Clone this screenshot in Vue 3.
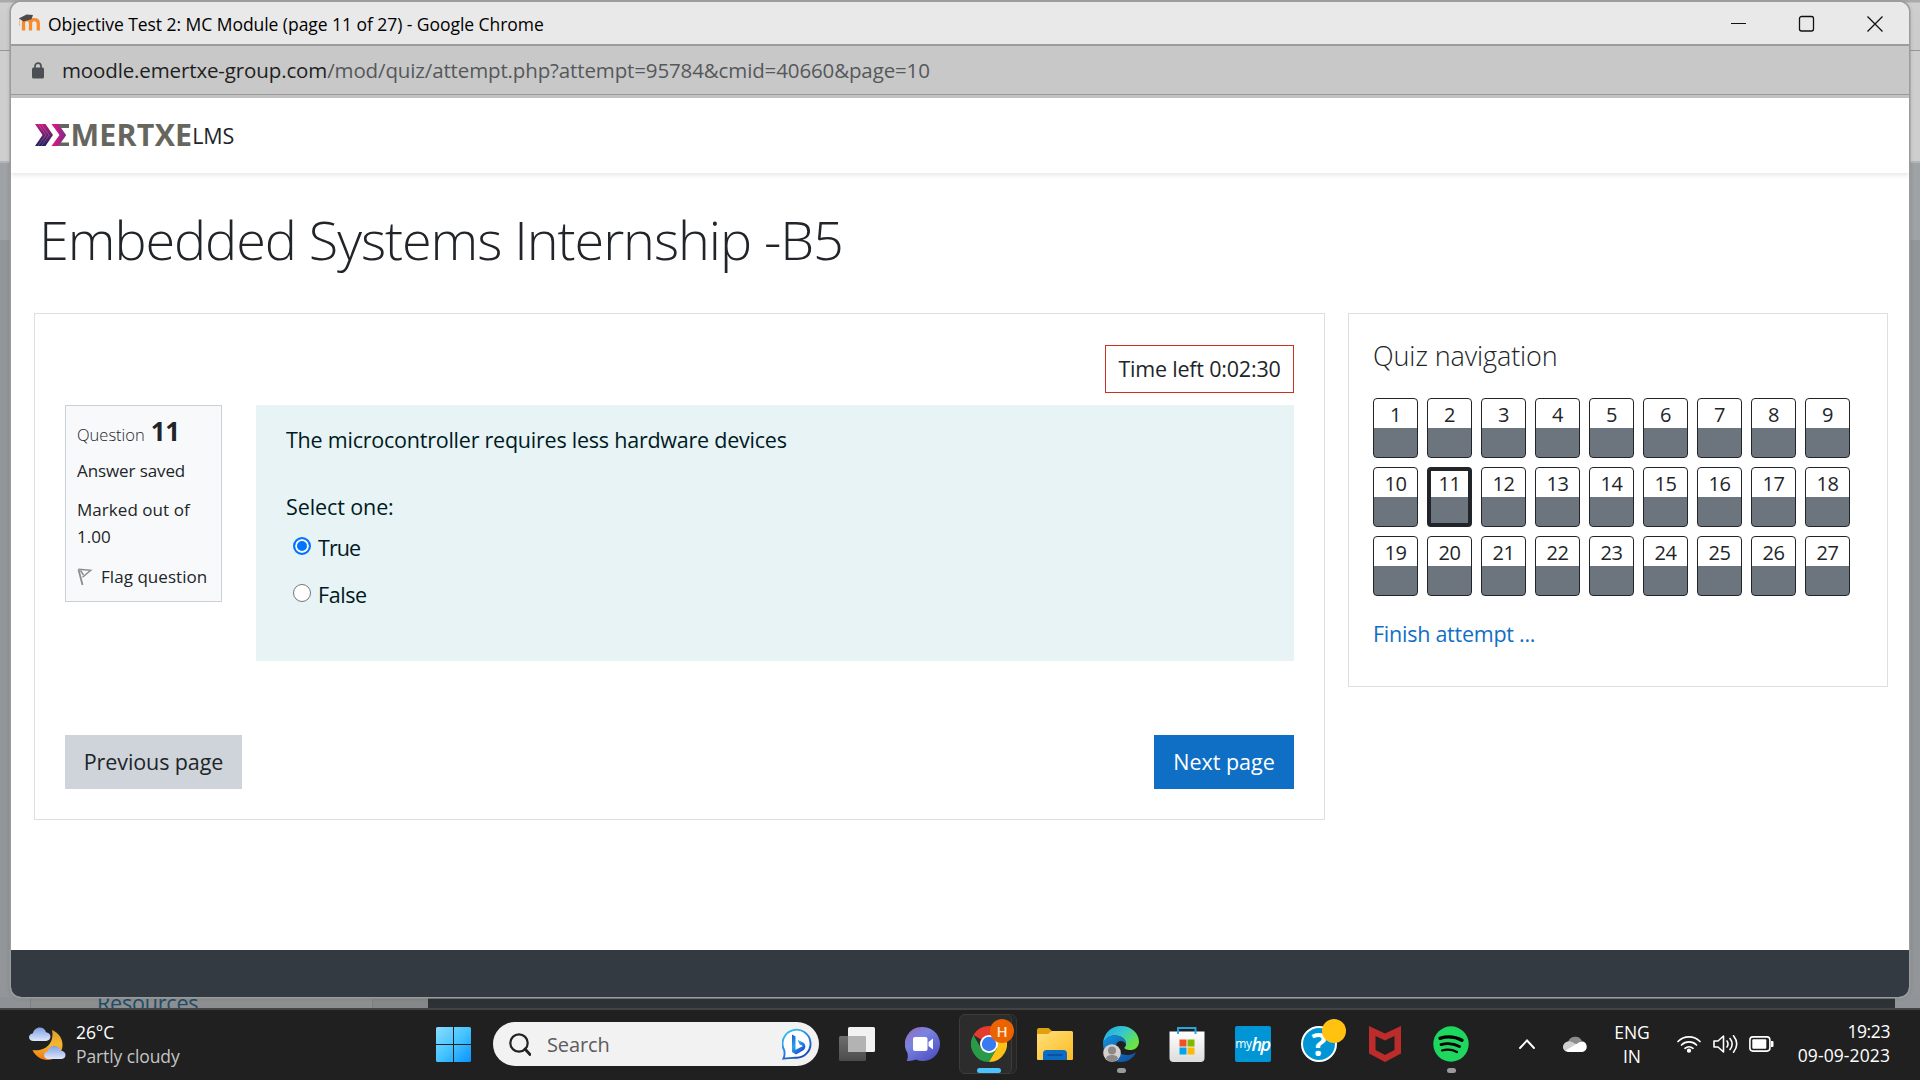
<script setup>
const questions = Array.from({ length: 27 }, (_, i) => i + 1)
const current = 11
</script>

<template>
  <div class="desktop">
    <div class="behind">
      <div class="b-tabs"></div>
      <div class="b-bar"></div>
      <div class="b-head"></div>
      <div class="b-body"></div>
      <div class="b-foot">
        <span class="b-margin"></span>
        <span class="b-list"><span class="b-link">Resources</span></span>
        <span class="b-scroll"></span>
        <span class="b-dark"></span>
        <span class="b-rest"></span>
      </div>
    </div>

    <div class="window">
      <div class="titlebar">
        <svg class="favicon" width="24" height="18" viewBox="0 0 24 18">
          <path d="M5.5 16.5V9.5c0-2.6 1.5-3.8 3.5-3.8s3.500 1.200 3.500 3.800v7M12.500 9.500c0-2.600 1.500-3.800 3.700-3.800s4.100 1.200 4.100 3.800v7" fill="none" stroke="#f98a2b" stroke-width="3.300" />
          <path d="M.8 4.600 8.500.5 15 1l-1.500 4.200-8 2.300z" fill="#4c4a4a" />
          <path d="M2 5c-.7 2-.7 4-.3 7" fill="none" stroke="#f6b98a" stroke-width="1" />
        </svg>
        <span class="wintitle">Objective Test 2: MC Module (page 11 of 27) - Google Chrome</span>
        <svg class="controls" width="160" height="20" viewBox="0 0 160 20" fill="none" stroke="#111">
          <path d="M2 9.500h15" stroke-width="1.200" />
          <rect x="70.500" y="2.500" width="14" height="14.500" rx="2" stroke-width="1.300" />
          <path d="M138.500 2.500l15 15M153.500 2.500l-15 15" stroke-width="1.300" />
        </svg>
      </div>
      <div class="urlbar">
        <svg width="12" height="17" viewBox="0 0 12 17">
          <path d="M3 8V4.200a3 3 0 0 1 6 0V8" fill="none" stroke="#4b4f54" stroke-width="1.700" />
          <rect x="0" y="5.500" width="12" height="11" rx="1.500" fill="#4b4f54" />
        </svg>
        <span class="url"><span class="domain">moodle.emertxe-group.com</span>/mod/quiz/attempt.php?attempt=95784&amp;cmid=40660&amp;page=10</span>
      </div>

      <header class="site">
        <svg class="mark" width="35" height="23" viewBox="0 0 35 23">
          <defs>
            <linearGradient id="mk1" x1="0" y1="0" x2="0" y2="1">
              <stop offset="0" stop-color="#c4177c" /><stop offset=".5" stop-color="#6a2270" /><stop offset="1" stop-color="#1e2360" />
            </linearGradient>
            <linearGradient id="mk2" x1="0" y1="0" x2="1" y2="0">
              <stop offset="0" stop-color="#ec1380" /><stop offset="1" stop-color="#7c2a90" />
            </linearGradient>
          </defs>
          <path d="M20 0h14v4h-8l5 7.500-5 7h8V22H18l7-10.500z" fill="#66645f" />
          <path d="M0 0h10.500l7.500 11-7.500 11H0l7.500-11z" fill="url(#mk1)" />
          <path d="M3 0l8 11M6 0l8 11M3 22l8-11M6.500 22l7.500-11" stroke="#fff" stroke-width=".5" opacity=".4" />
          <path d="M16.500 0h6.500l8 11-8 11h-6.500l8-11z" fill="url(#mk2)" />
        </svg>
        <span class="brand">MERTXE</span><span class="lms">LMS</span>
      </header>

      <main>
        <h1>Embedded Systems Internship -B5</h1>
        <div class="cols">
          <section class="card quiz">
            <div class="timer">Time left 0:02:30</div>
            <div class="qrow">
              <aside class="info">
                <div class="qno"><span>Question</span><b>11</b></div>
                <div class="state">Answer saved</div>
                <div class="grade">Marked out of<br>1.00</div>
                <div class="flag">
                  <svg width="16" height="18" viewBox="0 0 16 18" fill="none" stroke="#8a8d90">
                    <path d="M1.500 1.500l4 15.500" stroke-width="1.800" />
                    <path d="M1.500 1.300l12.300 1L5.500 9.200M3.500 2.500l3 4.500" stroke-width="1.400" />
                  </svg>
                  <span>Flag question</span>
                </div>
              </aside>
              <div class="content">
                <p class="qtext">The microcontroller requires less hardware devices</p>
                <p class="prompt">Select one:</p>
                <label class="opt"><i class="radio on"></i><span class="t">True</span></label>
                <label class="opt second"><i class="radio"></i><span class="f">False</span></label>
              </div>
            </div>
            <div class="actions">
              <button class="prev">Previous page</button>
              <button class="next">Next page</button>
            </div>
          </section>

          <section class="card nav">
            <h2>Quiz navigation</h2>
            <div class="grid">
              <a v-for="n in questions" :key="n" class="cell" :class="{ current: n === current }"><span>{{ n }}</span></a>
            </div>
            <a class="finish">Finish attempt ...</a>
          </section>
        </div>
      </main>
      <footer></footer>
    </div>

    <div class="taskbar">
      <div class="weather">
        <svg width="37" height="34" viewBox="0 0 37 34">
          <defs>
            <linearGradient id="moon" x1="0" y1="0" x2="0" y2="1"><stop offset="0" stop-color="#d9a032" /><stop offset=".5" stop-color="#f6b62d" /><stop offset="1" stop-color="#ee7613" /></linearGradient>
            <linearGradient id="cl" x1="0" y1="0" x2="0" y2="1"><stop offset="0" stop-color="#7f9fe4" /><stop offset="1" stop-color="#dfe8fb" /></linearGradient>
          </defs>
          <path d="M23 3c7 3 11 9 10.500 16C33 27 26 33 18.500 33 12 33 6 29 3.500 23 14 25 26 18 23 3z" fill="url(#moon)" />
          <path d="M4.500 14C2 14 0 12.500 0 10.200 0 8 2 6.500 4 6.300 4.500 3 7.500.5 10.800.5c3 0 5.500 2 6.200 4.700 2.300.2 4.500 2 4.500 4.400 0 2.600-2 4.400-4.500 4.400z" fill="url(#cl)" />
          <path d="M19.500 32c-2.500 0-4.500-1.500-4.500-3.700 0-2 1.500-3.500 3.500-3.800.7-3 3.500-5.500 6.800-5.500 3 0 5.500 1.800 6.500 4.700 2.700 0 4.700 1.800 4.700 4.200S34.500 32 32 32z" fill="url(#cl)" />
        </svg>
        <div class="wtext"><span>26°C</span><span class="dim">Partly cloudy</span></div>
      </div>

      <svg class="start" width="35" height="35" viewBox="0 0 35 35">
        <defs><linearGradient id="win" x1="0" y1="0" x2="1" y2="1"><stop offset="0" stop-color="#8bdcff" /><stop offset=".5" stop-color="#45c4ff" /><stop offset="1" stop-color="#0a93ff" /></linearGradient></defs>
        <path d="M1.500 0H17v17H0V1.500A1.500 1.500 0 0 1 1.500 0zM18 0h15.500A1.500 1.500 0 0 1 35 1.500V17H18zM0 18h17v17H1.500A1.500 1.500 0 0 1 0 33.500zM18 18h17v15.500a1.500 1.500 0 0 1-1.500 1.500H18z" fill="url(#win)" />
      </svg>

      <div class="search">
        <svg width="22" height="23" viewBox="0 0 22 23" fill="none" stroke="#222"><circle cx="10" cy="10" r="8.700" stroke-width="2.200" /><path d="M16 16l5 5.500" stroke-width="2.800" stroke-linecap="round" /></svg>
        <span>Search</span>
        <svg class="bing" width="31" height="32" viewBox="0 0 31 32">
          <defs>
            <linearGradient id="bg1" x1="0" y1="0" x2=".6" y2="1"><stop offset="0" stop-color="#2bd2f4" /><stop offset=".6" stop-color="#2a7fe0" /><stop offset="1" stop-color="#1649b8" /></linearGradient>
            <linearGradient id="bg2" x1="0" y1="0" x2=".6" y2="1"><stop offset="0" stop-color="#1b58d8" /><stop offset=".5" stop-color="#2aa5ec" /><stop offset="1" stop-color="#1b48d0" /></linearGradient>
          </defs>
          <path d="M1.500 30.500c1.200-2.500 1.300-5 .8-8A14 14 0 1 1 13 29.600c-3 .8-7 .2-11.500.9z" fill="#fff" stroke="url(#bg1)" stroke-width="1.900" />
          <path d="M10 6.500l3.500 2v13.200l7.500-3.700-3.500-1.700-1.800-4.300 5 2.200c3.500 1.800 3.500 6.500.3 8.300l-7 4L10 24z" fill="url(#bg2)" />
        </svg>
      </div>

      <div class="apps">
        <div class="slot">
          <svg width="36" height="36" viewBox="0 0 36 36">
            <defs><linearGradient id="tv" x1="0" y1="0" x2="0" y2="1"><stop offset="0" stop-color="#6e6e6e" /><stop offset="1" stop-color="#4c4c4c" /></linearGradient></defs>
            <rect x="0" y="10" width="27" height="25" rx="1.500" fill="url(#tv)" /><rect x="9" y="1" width="27" height="25" rx="1.500" fill="#f2f2f2" /><path d="M9 10h17q1 0 1 1v15H10.500Q9 26 9 24.500z" fill="#b3b3b3" />
          </svg>
        </div>
        <div class="slot">
          <svg width="36" height="36" viewBox="0 0 36 36">
            <defs><linearGradient id="ch" x1="0" y1="0" x2=".8" y2="1"><stop offset="0" stop-color="#9465b8" /><stop offset=".4" stop-color="#7a84e0" /><stop offset="1" stop-color="#4e4fc4" /></linearGradient></defs>
            <path d="M18 1a17 17 0 1 1-7 32.500c-3 1.500-7 1.500-9.500 1.500 1.500-2 1.500-5 1-8A17 17 0 0 1 18 1z" fill="url(#ch)" />
            <rect x="8" y="11" width="14.500" height="14" rx="2" fill="#fff" /><path d="M23.500 16l4.500-3.500v11L23.500 20z" fill="#fff" />
          </svg>
        </div>
        <div class="slot chrome">
          <div class="tile back"></div><div class="tile"></div>
          <svg width="36" height="36" viewBox="0 0 36 36">
            <path d="M18 18L2.400 9A18 18 0 0 1 33.600 9z" fill="#e33b2e" />
            <path d="M18 18L10.200 22.500 2.400 9A18 18 0 0 0 18 36l7.800-13.500z" fill="#2a9a48" />
            <path d="M18 9h15.600A18 18 0 0 1 18 36l7.800-13.500z" fill="#fbc116" />
            <circle cx="18" cy="18" r="9" fill="#fff" /><circle cx="18" cy="18" r="7.200" fill="#3a7af0" />
          </svg>
          <span class="badge h">H</span><i class="ind wide"></i>
        </div>
        <div class="slot">
          <svg width="36" height="36" viewBox="0 0 36 36">
            <defs><linearGradient id="fo" x1="0" y1="0" x2="1" y2="1"><stop offset="0" stop-color="#ffe07a" /><stop offset="1" stop-color="#fcbb23" /></linearGradient></defs>
            <path d="M0 4q0-2 2-2h9.500l3.500 3v6H0z" fill="#e0a010" /><path d="M0 8h11l4-3h19.500q1.500 0 1.500 1.500V33q0 1-1 1H1q-1 0-1-1z" fill="url(#fo)" />
            <path d="M6 34v-6.500q0-3.500 3.500-3.500h17q3.500 0 3.500 3.500V34z" fill="#0c6cc4" /><path d="M11 29h14" stroke="#084a94" stroke-width="1.600" stroke-linecap="round" />
          </svg>
        </div>
        <div class="slot">
          <svg width="36" height="36" viewBox="0 0 36 36">
            <defs>
              <linearGradient id="e1" x1="0" y1="0" x2="1" y2=".6"><stop offset="0" stop-color="#1fa6e6" /><stop offset=".5" stop-color="#35c6d0" /><stop offset="1" stop-color="#6be53e" /></linearGradient>
              <linearGradient id="e2" x1="0" y1="0" x2="1" y2="1"><stop offset="0" stop-color="#1193dd" /><stop offset="1" stop-color="#124a9c" /></linearGradient>
            </defs>
            <path d="M0 18C0 14 6 8 14 9.500c6 1 9 5 9 9-3-5-9-4.500-10 1-.8 6 5 10 12 9.500 4 0 7-2.500 8-2.500C30 33 24 36 18 36 8 36 0 28 0 18z" fill="url(#e2)" />
            <path d="M0 17C1 7 8 0 18 0c11 0 18 8 18 15.500 0 6-4.500 8.500-8.500 8.500-4 0-6.500-1.300-6-2.500 3-2.800 1.500-7-1.500-9.500C14 7.500 4 8.500 0 17z" fill="url(#e1)" />
            <circle cx="9" cy="27" r="8.800" fill="#d4d0cd" /><circle cx="9" cy="24.500" r="4" fill="#8d8986" /><path d="M3 33q0-4 6-4t6 4q-6 5-12 0z" fill="#8d8986" />
          </svg>
          <i class="ind"></i>
        </div>
        <div class="slot">
          <svg width="36" height="36" viewBox="0 0 36 36">
            <defs><linearGradient id="st" x1="0" y1="0" x2="0" y2="1"><stop offset="0" stop-color="#fff" /><stop offset="1" stop-color="#dcdcdc" /></linearGradient></defs>
            <path d="M.500 5.500h35V32q0 4-4 4h-27q-4 0-4-4z" fill="url(#st)" /><path d="M9 8V2h17.500v6" fill="none" stroke="#25a4e6" stroke-width="1.900" />
            <path d="M10.500 13.500h7v7h-7z" fill="#f25022" /><path d="M18.500 13.500h7v7h-7z" fill="#7fba00" /><path d="M10.500 21.500h7v7h-7z" fill="#00a4ef" /><path d="M18.500 21.500h7v7h-7z" fill="#ffb900" />
          </svg>
        </div>
        <div class="slot"><div class="myhp"><span>my</span><b>hp</b></div></div>
        <div class="slot">
          <div class="help">?</div><span class="badge"></span>
        </div>
        <div class="slot">
          <svg width="32" height="36" viewBox="0 0 32 36"><path d="M0 0l16 7.500L32 0v27.500L16 36 0 27.500zM6.500 10v14l9.500 5 9.500-5V10L16 14.500z" fill="#bd2c2b" fill-rule="evenodd" /></svg>
        </div>
        <div class="slot">
          <svg width="36" height="36" viewBox="0 0 36 36"><circle cx="18" cy="18" r="17.700" fill="#1ed75f" /><g fill="none" stroke="#000" stroke-linecap="round"><path d="M7 12.300c7.500-2.300 15.500-1.500 22 2" stroke-width="3.300" /><path d="M8 18.600c6.500-1.800 13-1 18.500 2" stroke-width="2.800" /><path d="M9 24.500c5.500-1.500 10.500-.8 15 1.500" stroke-width="2.200" /></g></svg>
          <i class="ind"></i>
        </div>
      </div>

      <div class="tray">
        <svg width="16" height="10" viewBox="0 0 16 10" fill="none" stroke="#fff" stroke-width="1.900" stroke-linecap="round"><path d="M1 9l7-7.500L15 9" /></svg>
        <svg class="cloud" width="24" height="17" viewBox="0 0 24 17">
          <path d="M5 6a7.500 7.500 0 0 1 14-1l-7 4z" fill="#8c8c8c" /><path d="M4.500 16A5 5 0 0 1 1 8c2-3 5.500-3.500 8-2l8 4L5 16z" fill="#cfcfcf" /><path d="M2.500 14.500L15 7q2-2 5-1.500c5 1.500 5.200 9.500-.5 10.500H5.500z" fill="#fff" />
        </svg>
        <div class="lang"><span>ENG</span><span>IN</span></div>
        <svg class="wifi" width="24" height="18" viewBox="0 0 24 18" fill="none" stroke="#fff" stroke-width="1.700" stroke-linecap="round"><path d="M1 6.500a15.500 15.500 0 0 1 22 0M4.500 10a10.800 10.800 0 0 1 15 0M8 13.300a6 6 0 0 1 8 0" /><circle cx="12" cy="15.700" r="1.300" fill="#fff" /></svg>
        <svg class="vol" width="25" height="20" viewBox="0 0 25 20" fill="none" stroke="#fff" stroke-width="1.600" stroke-linecap="round" stroke-linejoin="round"><path d="M1 7v6h4l5.500 5V2L5 7zM14 7q2 3 0 6M17 4.500q4.300 5.500 0 11M20.500 1.800q6.500 8.200 0 16.400" /></svg>
        <svg class="bat" width="25" height="16" viewBox="0 0 25 16"><rect x=".9" y=".9" width="20" height="14.200" rx="3" fill="none" stroke="#fff" stroke-width="1.600" /><rect x="3.300" y="3.300" width="14" height="9.400" rx="1" fill="#fff" /><path d="M22 5h1.500q1 0 1 1v4q0 1-1 1H22z" fill="#fff" /></svg>
        <div class="clock"><span>19:23</span><span class="date">09-09-2023</span></div>
      </div>
    </div>
  </div>
</template>

<style>
body { margin: 0; overflow: hidden; }
</style>

<style scoped>
* { box-sizing: border-box; }
.desktop { position: relative; width: 1920px; height: 1080px; overflow: hidden; font-family: "Open Sans", "Noto Sans", sans-serif; font-size: 21.5px; letter-spacing: -0.2px; color: #212529; }
.behind { position: absolute; inset: 0 0 72px 0; display: flex; flex-direction: column; }
.b-tabs { height: 51px; background: linear-gradient(#aaa 0 2px, #cfcfcf 3px, #cbcbcb); border-bottom: 1px solid #969696; }
.b-bar { height: 112px; background: #cecece; border-bottom: 2px solid #b4b6b8; }
.b-head { height: 77px; background: #9fa3a6; }
.b-body { flex: 1; background: #939699; }
.b-foot { height: 11px; display: flex; }
.b-margin { width: 31px; background: #8e9195; border-right: 1px solid #7d8083; }
.b-list { width: 342px; background: #8c8e90; padding-left: 66px; border-right: 1px solid #7d8083; }
.b-link { display: block; font-size: 21.5px; line-height: 24px; margin-top: -6px; color: #1d4c66; }
.b-scroll { width: 55px; background: #858789; }
.b-dark { width: 1467px; background: #2c3236; border-top: 2px solid #46494c; }
.b-rest { flex: 1; background: #919498; }

.window { position: absolute; left: 11px; top: 2px; width: 1898px; height: 995px; border-radius: 10px; overflow: hidden; background: #fff; display: flex; flex-direction: column; box-shadow: 0 0 0 1.500px #999b9c, 0 0 5px rgba(0, 0, 0, .25); }
.titlebar { height: 44px; background: #e9e9e9; border-bottom: 2px solid #9c9c9c; display: flex; align-items: center; padding: 1px 20px 0 7px; }
.favicon { margin: -2px 6px 0 0; }
.wintitle { font-size: 17.5px; color: #000; letter-spacing: -0.05px; flex: 1; }
.controls { width: 160px; }
.urlbar { height: 52px; background: #c8c8c8; display: flex; align-items: center; padding: 0 0 4px 21px; box-shadow: inset 0 -3px #c4c4c4, inset 0 -4px #999; }
.url { font-size: 20.5px; letter-spacing: -0.13px; color: #55585b; margin-left: 18px; }
.domain { color: #1d1f21; }
.site { height: 75px; display: flex; align-items: center; padding-left: 24px; box-shadow: 0 2px 5px rgba(0, 0, 0, .1); }
.mark { margin-top: -1px; }
.brand { font-weight: 700; font-size: 30.4px; color: #66665e; letter-spacing: 0.2px; margin-left: 0.5px; margin-top: -2px; }
.lms { font-size: 21.5px; letter-spacing: -0.2px; }

main { flex: 1; padding: 33px 21px 0 23px; }
h1 { font-weight: 300; font-size: 54px; line-height: 66px; letter-spacing: -1.07px; margin: 0 0 41px 5px; }
.cols { display: flex; gap: 23px; align-items: flex-start; }
.card { border: 1px solid #dedfe0; background: #fff; }
.quiz { width: 1291px; height: 507px; padding: 31px 30px 30px; display: flex; flex-direction: column; }
.timer { align-self: flex-end; width: 189px; height: 48px; border: 1px solid #ca3120; line-height: 46px; text-align: center; white-space: nowrap; }
.qrow { display: flex; align-items: flex-start; gap: 34px; margin-top: 12px; }
.info { width: 157px; height: 197px; border: 1px solid #cad0d7; background: #f8f9fa; padding: 10px 0 0 11px; font-size: 17px; line-height: 27px; letter-spacing: 0; white-space: nowrap; }
.qno { display: flex; align-items: baseline; height: 30px; line-height: 30px; gap: 6px; }
.qno span { font-weight: 300; font-size: 16.5px; }
.qno b { font-size: 26px; letter-spacing: -0.5px; }
.state { margin-top: 11px; letter-spacing: -0.1px; }
.grade { margin-top: 12px; letter-spacing: 0.05px; }
.flag { margin-top: 13px; display: flex; align-items: center; gap: 8px; letter-spacing: 0.05px; }
.content { flex: 1; height: 256px; background: #e7f3f5; color: #001a1e; padding: 18px 30px; line-height: 34px; }
.content p { margin: 0; }
.qtext { letter-spacing: -0.23px; }
.prompt { padding-top: 33px; letter-spacing: -0.1px; }
.opt { display: flex; align-items: center; margin-top: 7px; padding-left: 7px; gap: 7px; }
.opt.second { margin-top: 13px; }
.t { letter-spacing: -0.9px; }
.f { letter-spacing: -0.4px; }
.radio { width: 18px; height: 18px; border-radius: 50%; border: 1.500px solid #767676; background: #fff; margin-top: -4px; }
.radio.on { border: 2px solid #0075ff; box-shadow: inset 0 0 0 2px #fff; background: #0075ff; }
.actions { display: flex; justify-content: space-between; margin-top: 74px; }
button { height: 54px; border: 0; font: inherit; letter-spacing: inherit; padding: 0; color: #212529; line-height: 54px; }
.prev { width: 177px; background: #ced4da; letter-spacing: -0.1px; }
.next { width: 140px; background: #0f6fc5; color: #fff; letter-spacing: 0; }
.nav { width: 540px; height: 374px; padding: 26px 24px 0; }
h2 { margin: 0 0 26px; font-weight: 300; font-size: 27px; line-height: 32px; letter-spacing: -0.1px; }
.grid { display: grid; grid-template-columns: repeat(9, 45px); gap: 9px; }
.cell { height: 60px; border: 1px solid #212529; border-radius: 4px; background: linear-gradient(#fff 0 29px, #6c757d 29px); text-align: center; font-size: 20px; line-height: 32px; letter-spacing: -0.5px; overflow: hidden; }
.cell.current { border-width: 4px; line-height: 26px; background: linear-gradient(#fff 0 26px, #6c757d 26px); }
.finish { display: block; line-height: 34px; margin-top: 21px; color: #0f6fc5; letter-spacing: -0.25px; }
footer { height: 47px; background: #343a42; }

.taskbar { position: absolute; left: 0; bottom: 0; width: 1920px; height: 72px; background: #202020; border-top: 2px solid #434343; padding-bottom: 2px; display: flex; align-items: center; color: #fff; font-size: 17.5px; letter-spacing: -0.1px; }
.weather { width: 436px; padding-left: 29px; display: flex; align-items: center; gap: 10px; }
.wtext { display: flex; flex-direction: column; line-height: 24px; margin-top: -1px; }
.dim { color: #c4c4c4; letter-spacing: -0.1px; }
.search { width: 326px; height: 44px; margin-left: 22px; border-radius: 22px; background: #f2f2f2; display: flex; align-items: center; padding: 0 6px 0 16px; color: #5c5c5c; font-size: 20px; }
.search span { flex: 1; margin-left: 16px; }
.apps { display: flex; margin-left: 5px; height: 68px; }
.slot { position: relative; width: 66px; display: flex; align-items: center; justify-content: center; }
.slot > svg { position: relative; }
.tile { position: absolute; left: 3px; top: 4px; width: 53px; height: 60px; border-radius: 6px; background: #2c2c2c; border: 1px solid #3c3c3c; }
.tile.back { left: 20px; width: 41px; background: #262626; border-color: #343434; }
.badge { position: absolute; left: 36px; top: 9px; width: 24px; height: 24px; border-radius: 50%; background: #ffc20e; }
.badge.h { left: 34px; background: #ea6300; color: #fde4d0; font-size: 15px; line-height: 24px; font-weight: 600; text-align: center; }
.ind { position: absolute; bottom: 5px; left: 29px; width: 9px; height: 5px; border-radius: 3px; background: #9a9a9a; }
.ind.wide { left: 21px; width: 24px; background: #4cc2ff; }
.myhp { width: 36px; height: 36px; border-radius: 2px; background: #0096d6; display: flex; align-items: center; justify-content: center; line-height: 36px; letter-spacing: -0.5px; }
.myhp span { font-size: 12px; }
.myhp b { font-size: 18px; font-style: italic; font-weight: 600; letter-spacing: -1.500px; margin-right: 1px; }
.help { width: 36px; height: 36px; border-radius: 50%; border: 2px solid #fff; background: #0096d6; font-size: 32px; line-height: 32px; font-weight: 700; text-align: center; }
.tray { display: flex; align-items: center; margin-left: 35px; height: 68px; }
.cloud { margin-left: 28px; }
.lang { margin-left: 26px; width: 38px; text-align: center; display: flex; flex-direction: column; line-height: 24px; }
.wifi { margin-left: 26px; }
.vol { margin-left: 12px; }
.bat { margin-left: 11px; }
.clock { width: 116px; text-align: right; display: flex; flex-direction: column; line-height: 24px; margin-top: -2px; letter-spacing: -0.4px; }
.date { letter-spacing: 0.1px; }
</style>
